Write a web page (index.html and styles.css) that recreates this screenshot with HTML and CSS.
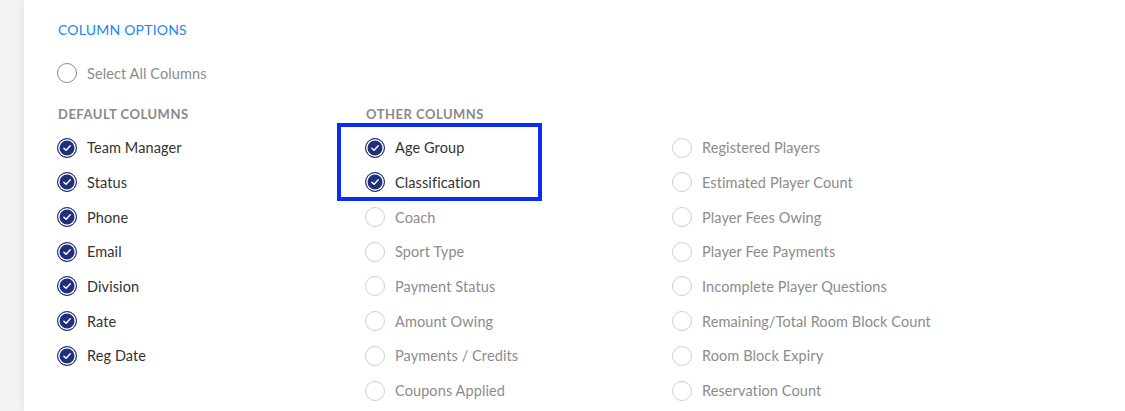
FILE: index.html
```html
<!DOCTYPE html>
<html lang="en">
<head>
    <meta charset="UTF-8">
    <meta name="viewport" content="width=device-width, initial-scale=1.0">
    <title>Column Options</title>
    <link rel="stylesheet" href="styles.css">
</head>
<body>
    <div class="panel">
        <h2 class="panel-title">COLUMN OPTIONS</h2>

        <label class="option select-all">
            <span class="radio"></span>
            <span class="option-text">Select All Columns</span>
        </label>

        <div class="columns">
            <div class="column">
                <div class="column-head">DEFAULT COLUMNS</div>
                <label class="option on"><span class="radio"><svg viewBox="0 0 20 20"><polyline points="6.5,10.2 9,12.6 13.6,7.6"/></svg></span><span class="option-text">Team Manager</span></label>
                <label class="option on"><span class="radio"><svg viewBox="0 0 20 20"><polyline points="6.5,10.2 9,12.6 13.6,7.6"/></svg></span><span class="option-text">Status</span></label>
                <label class="option on"><span class="radio"><svg viewBox="0 0 20 20"><polyline points="6.5,10.2 9,12.6 13.6,7.6"/></svg></span><span class="option-text">Phone</span></label>
                <label class="option on"><span class="radio"><svg viewBox="0 0 20 20"><polyline points="6.5,10.2 9,12.6 13.6,7.6"/></svg></span><span class="option-text">Email</span></label>
                <label class="option on"><span class="radio"><svg viewBox="0 0 20 20"><polyline points="6.5,10.2 9,12.6 13.6,7.6"/></svg></span><span class="option-text">Division</span></label>
                <label class="option on"><span class="radio"><svg viewBox="0 0 20 20"><polyline points="6.5,10.2 9,12.6 13.6,7.6"/></svg></span><span class="option-text">Rate</span></label>
                <label class="option on"><span class="radio"><svg viewBox="0 0 20 20"><polyline points="6.5,10.2 9,12.6 13.6,7.6"/></svg></span><span class="option-text">Reg Date</span></label>
            </div>

            <div class="column other">
                <div class="column-head">OTHER COLUMNS</div>
                <div class="highlight"></div>
                <label class="option on"><span class="radio"><svg viewBox="0 0 20 20"><polyline points="6.5,10.2 9,12.6 13.6,7.6"/></svg></span><span class="option-text">Age Group</span></label>
                <label class="option on"><span class="radio"><svg viewBox="0 0 20 20"><polyline points="6.5,10.2 9,12.6 13.6,7.6"/></svg></span><span class="option-text">Classification</span></label>
                <label class="option"><span class="radio"></span><span class="option-text">Coach</span></label>
                <label class="option"><span class="radio"></span><span class="option-text">Sport Type</span></label>
                <label class="option"><span class="radio"></span><span class="option-text">Payment Status</span></label>
                <label class="option"><span class="radio"></span><span class="option-text">Amount Owing</span></label>
                <label class="option"><span class="radio"></span><span class="option-text">Payments / Credits</span></label>
                <label class="option"><span class="radio"></span><span class="option-text">Coupons Applied</span></label>
            </div>

            <div class="column">
                <div class="column-head"></div>
                <label class="option"><span class="radio"></span><span class="option-text">Registered Players</span></label>
                <label class="option"><span class="radio"></span><span class="option-text">Estimated Player Count</span></label>
                <label class="option"><span class="radio"></span><span class="option-text">Player Fees Owing</span></label>
                <label class="option"><span class="radio"></span><span class="option-text">Player Fee Payments</span></label>
                <label class="option"><span class="radio"></span><span class="option-text">Incomplete Player Questions</span></label>
                <label class="option"><span class="radio"></span><span class="option-text">Remaining/Total Room Block Count</span></label>
                <label class="option"><span class="radio"></span><span class="option-text">Room Block Expiry</span></label>
                <label class="option"><span class="radio"></span><span class="option-text">Reservation Count</span></label>
            </div>
        </div>
    </div>
</body>
</html>
```

FILE: styles.css
```css
body {
    margin: 0;
    background: #f3f3f3;
    font-family: 'Lato', 'Open Sans', sans-serif;
    overflow: hidden;
}

.panel {
    margin-left: 24px;
    min-height: 411px;
    padding: 20px 0 0 33px;
    background: #fff;
    box-shadow: 0 0 10px rgba(0, 0, 0, 0.08);
    box-sizing: border-box;
}

.panel-title {
    margin: 0 0 16px 1px;
    font-size: 14px;
    line-height: 20px;
    font-weight: 400;
    letter-spacing: 0.2px;
    color: #1a86f0;
}

.option {
    display: flex;
    align-items: center;
    gap: 10px;
    height: 34.7px;
    font-size: 14.5px;
    letter-spacing: 0.1px;
    color: #8c8c8c;
}

.select-all {
    margin-bottom: 6px;
}

.radio {
    width: 20px;
    height: 20px;
    border: 1px solid #cfcfcf;
    border-radius: 50%;
    box-sizing: border-box;
    flex-shrink: 0;
    display: flex;
}

.select-all .radio {
    border-color: #8a8a8a;
}

.option.on {
    color: #333;
}

.option.on .radio {
    border: 1px solid #1f2f7a;
    background: #1f2f7a;
    box-shadow: inset 0 0 0 1.5px #fff;
}

.radio svg {
    width: 100%;
    height: 100%;
}

.radio polyline {
    fill: none;
    stroke: #fff;
    stroke-width: 1.6;
    stroke-linecap: round;
    stroke-linejoin: round;
}

.columns {
    display: grid;
    grid-template-columns: 308px 307px 1fr;
}

.column {
    display: flex;
    flex-direction: column;
}

.column.other {
    position: relative;
}

.column-head {
    height: 33.7px;
    display: flex;
    align-items: center;
    padding-left: 1px;
    font-size: 13px;
    font-weight: 700;
    letter-spacing: 0.5px;
    color: #8a8a8a;
}

/* annotation frame drawn over the first two items */
.highlight {
    position: absolute;
    left: -28px;
    top: 26px;
    width: 205px;
    height: 78px;
    border: 4.5px solid #0a2cf5;
    box-sizing: border-box;
}
```
